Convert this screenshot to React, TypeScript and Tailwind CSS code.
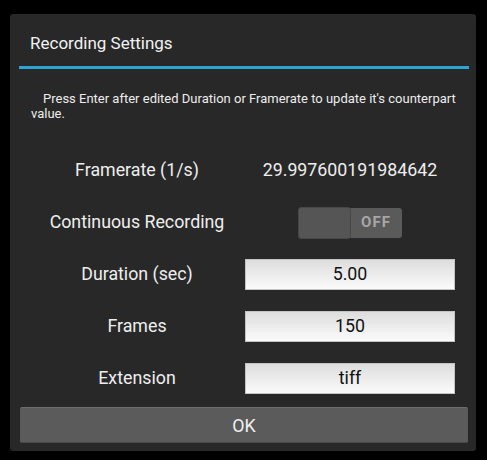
import React from "react"

const rows = [
  { label: "Duration (sec)", value: "5.00" },
  { label: "Frames", value: "150" },
  { label: "Extension", value: "tiff" },
]

function Toggle() {
  return (
    <div className="flex items-center">
      <div className="w-[53px] h-[32px] bg-[#555555] border border-[#474747] rounded-[3px] z-10" />
      <div className="-ml-[1px] w-[52px] h-[30px] bg-[#5a5a5a] rounded-r-[3px] flex items-center justify-center text-[15px] font-bold tracking-[1px] text-[#a6a6a6]">
        OFF
      </div>
    </div>
  )
}

export default function App() {
  return (
    <div className="w-[487px] h-[460px] bg-black pt-[14px] pl-[10px] font-['Roboto',sans-serif]">
      <div className="w-[466px] h-[437px] bg-[#282828] rounded-[3px] flex flex-col">
        {/* Title */}
        <div className="h-[52px] pt-[8px] pl-[20px] flex items-center text-[17px] text-[#f2f2f2]">
          Recording Settings
        </div>
        <div className="ml-[9px] w-[450px] h-[2.5px] bg-[#2da3d4]" />

        {/* Hint */}
        <p className="mt-[22px] ml-[21px] w-[425px] text-[13px] leading-[15px] text-[#ededed] indent-[12px]">
          Press Enter after edited Duration or Framerate to update it's counterpart value.
        </p>

        {/* Settings */}
        <div className="mt-[24px] flex flex-col text-[17.8px] text-[#eeeeee]">
          <div className="h-[52px] flex items-center pl-[19px]">
            <div className="w-[216px] text-center">Framerate (1/s)</div>
            <div className="w-[210px] text-center">29.997600191984642</div>
          </div>
          <div className="h-[52px] flex items-center pl-[19px]">
            <div className="w-[216px] text-center">Continuous Recording</div>
            <div className="w-[210px] flex justify-center">
              <Toggle />
            </div>
          </div>
          {rows.map((row) => (
            <div key={row.label} className="h-[52px] flex items-center pl-[19px]">
              <div className="w-[216px] text-center">{row.label}</div>
              <div className="w-[210px] h-[31px] border border-[#c4c4c4] bg-gradient-to-b from-[#dddddd] to-[#fbfbfb] flex items-center justify-center text-[#111111]">
                {row.value}
              </div>
            </div>
          ))}
        </div>

        {/* OK */}
        <button className="mt-[2px] ml-[10px] w-[448px] h-[36px] pt-[3px] bg-[#5b5b5b] border-t border-t-[#6c6c6c] border-b border-b-[#4a4a4a] rounded-[2px] text-[17.8px] text-[#f0f0f0]">
          OK
        </button>
      </div>
    </div>
  )
}
